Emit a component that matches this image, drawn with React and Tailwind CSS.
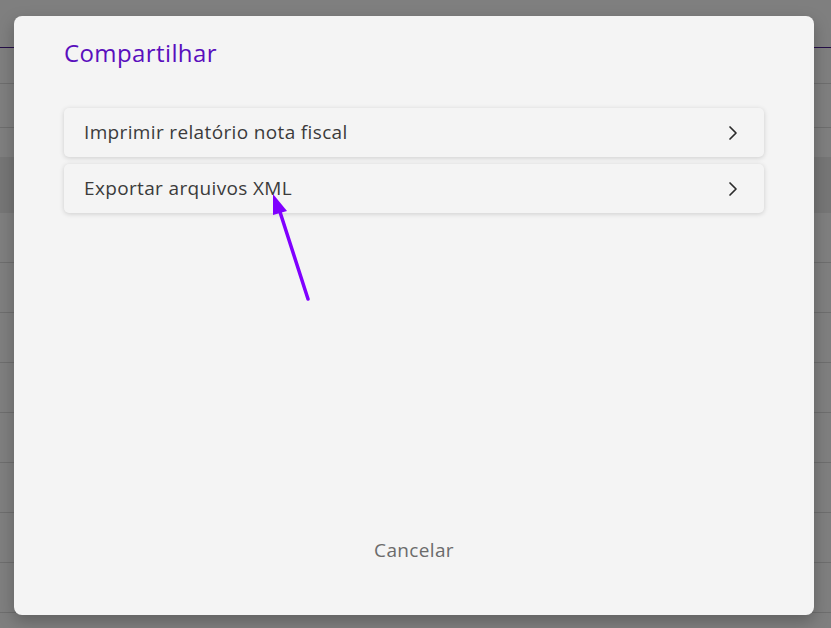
import { ChevronRight } from "lucide-react";

const OPTIONS = ["Imprimir relatório nota fiscal", "Exportar arquivos XML"];

const ROWS = Array.from({ length: 8 });

export default function App() {
  return (
    <div
      className="relative h-[628px] w-full overflow-hidden bg-white"
      style={{ fontFamily: "'Open Sans', 'Noto Sans', sans-serif" }}
    >
      {/* page behind the overlay */}
      <div className="flex flex-col">
        <div className="h-[48px] border-b border-[#4b1d8f]" />
        <div className="h-[36px] border-b border-[#dcdcdc]" />
        <div className="h-[44px] border-b border-[#dcdcdc]" />
        <div className="h-[29px]" />
        <div className="h-[56px] bg-[#ececec]" />
        {ROWS.map((_, i) => (
          <div key={i} className="h-[50px] border-b border-[#dcdcdc]" />
        ))}
      </div>

      {/* overlay */}
      <div className="absolute inset-0 bg-black/50" />

      {/* dialog */}
      <div className="absolute left-[14px] top-[16px] flex h-[599px] w-[800px] flex-col rounded-lg bg-[#f4f4f4] px-[50px] pt-[21px] pb-[51px] shadow-[0_6px_16px_rgba(0,0,0,0.25)]">
        <h2 className="text-[24px] leading-[32px] tracking-[0.4px] text-[#5a0fbd]">Compartilhar</h2>

        <div className="mt-[39px] flex flex-col gap-[7px]">
          {OPTIONS.map((label) => (
            <button
              key={label}
              className="flex h-[49px] items-center justify-between rounded-[5px] bg-[#f4f4f4] pl-[20px] pr-[19px] text-left text-[19px] tracking-[0.35px] text-[#3b3b3b] shadow-[0_1px_5px_rgba(0,0,0,0.16)]"
            >
              <span>{label}</span>
              <ChevronRight size={24} strokeWidth={1.7} className="text-[#2b2b2b]" />
            </button>
          ))}
        </div>

        <div className="mt-auto flex justify-center">
          <button className="text-[19px] tracking-[0.35px] text-[#6b6b6b]">Cancelar</button>
        </div>
      </div>

      {/* annotation arrow */}
      <svg className="absolute left-0 top-0" width="831" height="628" viewBox="0 0 831 628">
        <line x1="308" y1="299" x2="280" y2="212" stroke="#8000ff" strokeWidth="3.5" strokeLinecap="round" />
        <polygon points="273,194 287,211 273,215" fill="#8000ff" />
      </svg>
    </div>
  );
}
